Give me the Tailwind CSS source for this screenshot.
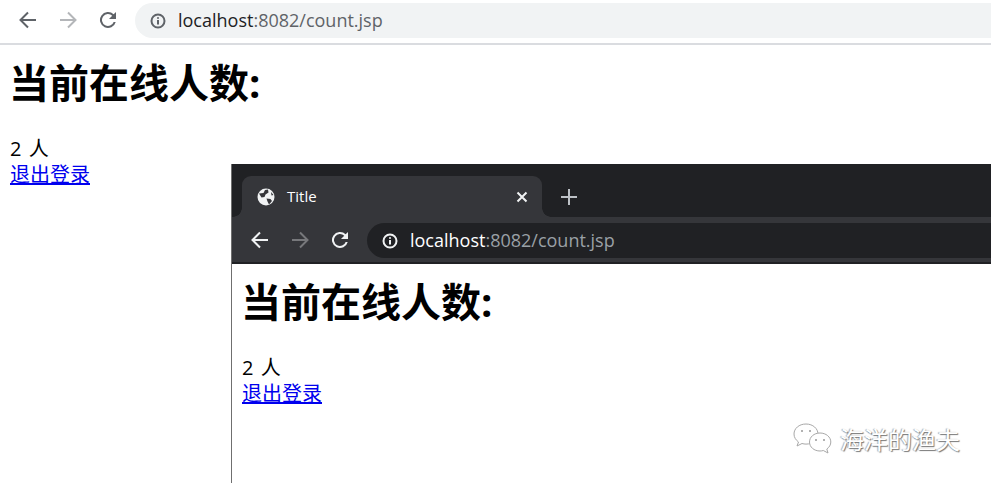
<!DOCTYPE html>
<html lang="zh-CN">
<head>
  <meta charset="UTF-8" />
  <title>count.jsp</title>
  <script src="https://cdn.jsdelivr.net/npm/@tailwindcss/browser@4"></script>
</head>
<body class="relative h-[483px] w-[991px] overflow-hidden bg-white font-['Open_Sans','Noto_Sans_CJK_SC',sans-serif] text-black">

  <!-- Light browser toolbar -->
  <div class="flex h-[45px] items-start border-b-2 border-[#dadce0] bg-white">
    <div class="flex h-[40px] items-center gap-[16px] pl-[16px] text-[#5f6368]">
      <svg class="h-[24px] w-[24px]" viewBox="0 0 24 24" fill="none" stroke="#5f6368" stroke-width="2"><path d="M20 12H5M12 4.500 4.500 12l7.500 7.500"/></svg>
      <svg class="h-[24px] w-[24px]" viewBox="0 0 24 24" fill="none" stroke="#b4b6b9" stroke-width="2"><path d="M4 12h15M12 4.500 19.500 12 12 19.500"/></svg>
      <svg class="h-[24px] w-[24px]" viewBox="0 0 24 24" fill="#5f6368"><path d="M17.650 6.350A8 8 0 1 0 19.730 14h-2.080a6 6 0 1 1-1.410-6.240L13 11h7V4z"/></svg>
    </div>
    <div class="mt-[3px] ml-[15px] flex h-[35px] flex-1 items-center rounded-l-full bg-[#f1f3f4] pl-[15px]">
      <svg class="h-[16px] w-[16px]" viewBox="0 0 16 16" fill="none" stroke="#5f6368"><circle cx="8" cy="8" r="6.500" stroke-width="2"/><path d="M8 7v4.500" stroke-width="2"/><path d="M8 4.200v1.600" stroke-width="2"/></svg>
      <span class="ml-[12px] text-[18px] text-[#5f6368]"><span class="text-[#202124]">localhost</span>:8082/count.jsp</span>
    </div>
  </div>

  <!-- Page content -->
  <div class="pl-[10px]">
    <h1 class="mt-[14px] -ml-[1px] text-[40px] leading-[47px] font-bold">当前在线人数:</h1>
    <p class="mt-[30px] text-[20px] leading-[26px] [word-spacing:2px]">2 人</p>
    <a href="#" class="block w-fit text-[20px] leading-[26px] text-[#0000ee] underline">退出登录</a>
  </div>

  <!-- Dark browser window laid over the page -->
  <div class="absolute top-[164px] right-0 bottom-0 left-[231px] border-l border-[#6f6f6f] bg-white">
    <div class="flex h-[53px] items-end bg-[#202124] pl-[10px]">
      <div class="relative flex h-[41px] w-[300px] items-center rounded-t-[9px] bg-[#35363a] pl-[15px] text-white">
        <div class="absolute bottom-0 -left-[9px] h-[9px] w-[9px] bg-[radial-gradient(circle_at_0_0,#202124_8.500px,#35363a_9px)]"></div>
        <div class="absolute -right-[9px] bottom-0 h-[9px] w-[9px] bg-[radial-gradient(circle_at_100%_0,#202124_8.500px,#35363a_9px)]"></div>
        <svg class="h-[18px] w-[18px]" viewBox="0 0 18 18"><circle cx="9" cy="9" r="8.500" fill="#f1f3f4"/><path d="M2 5.500 6.500 5 8 2l3-.5.500 3-3 2-1 2.500-3 .5zM9.500 10.500l4 .5 1.500 2-3 3.500-1.500-3zM14 4l2.500 3-2 .500z" fill="#35363a"/></svg>
        <span class="ml-[12px] flex-1 text-[15px]">Title</span>
        <svg class="mr-[14px] h-[12px] w-[12px]" viewBox="0 0 12 12" stroke="#f1f3f4" stroke-width="2"><path d="M1.500 1.500l9 9M10.500 1.500l-9 9"/></svg>
      </div>
      <svg class="mb-[12px] ml-[19px] h-[16px] w-[16px]" viewBox="0 0 16 16" stroke="#bdc1c6" stroke-width="2"><path d="M8 0v16M0 8h16"/></svg>
    </div>
    <div class="flex h-[47px] items-start border-b-2 border-[#202124] bg-[#35363a]">
      <div class="flex h-[46px] items-center gap-[16px] pl-[16px]">
        <svg class="h-[24px] w-[24px]" viewBox="0 0 24 24" fill="none" stroke="#f1f3f4" stroke-width="2"><path d="M20 12H5M12 4.500 4.500 12l7.500 7.500"/></svg>
        <svg class="h-[24px] w-[24px]" viewBox="0 0 24 24" fill="none" stroke="#77787b" stroke-width="2"><path d="M4 12h15M12 4.500 19.500 12 12 19.500"/></svg>
        <svg class="h-[24px] w-[24px]" viewBox="0 0 24 24" fill="#f1f3f4"><path d="M17.650 6.350A8 8 0 1 0 19.730 14h-2.080a6 6 0 1 1-1.410-6.240L13 11h7V4z"/></svg>
      </div>
      <div class="mt-[6px] ml-[15px] flex h-[35px] flex-1 items-center rounded-l-full bg-[#202124] pl-[15px]">
        <svg class="h-[16px] w-[16px]" viewBox="0 0 16 16" fill="none" stroke="#f1f3f4"><circle cx="8" cy="8" r="6.500" stroke-width="2"/><path d="M8 7v4.500" stroke-width="2"/><path d="M8 4.200v1.600" stroke-width="2"/></svg>
        <span class="ml-[12px] text-[18px] text-[#9aa0a6]"><span class="text-white">localhost</span>:8082/count.jsp</span>
      </div>
    </div>
    <div class="pl-[10px]">
      <h1 class="mt-[14px] -ml-[1px] text-[40px] leading-[47px] font-bold">当前在线人数:</h1>
      <p class="mt-[30px] text-[20px] leading-[26px] [word-spacing:2px]">2 人</p>
      <a href="#" class="block w-fit text-[20px] leading-[26px] text-[#0000ee] underline">退出登录</a>
    </div>
  </div>

  <!-- Watermark -->
  <div class="absolute top-[422px] left-[792px] flex items-center">
    <svg class="h-[36px] w-[40px]" viewBox="0 0 40 36" fill="#fff" stroke="#a8a8a8" stroke-width="1"><path d="M14 2C7 2 2 6.500 2 12c0 3.300 1.800 6 4.500 8L5 24l5-2.500c1.300.4 2.700.6 4 .6 7 0 12-4.600 12-10S21 2 14 2z"/><path d="M28 11c-6 0-10.500 4-10.500 9s4.500 9 10.500 9c1.200 0 2.300-.2 3.300-.5L36 31l-1.200-4c2.500-1.700 4-4.200 4-7 0-5-4.800-9-10.800-9z"/><circle cx="10" cy="9" r="1" stroke="none" fill="#999"/><circle cx="18" cy="9" r="1" stroke="none" fill="#999"/><circle cx="24" cy="18" r="1" stroke="none" fill="#999"/><circle cx="32" cy="18" r="1" stroke="none" fill="#999"/></svg>
    <span class="ml-[8px] text-[24px] leading-[32px] text-white [text-shadow:1px_1px_1px_#777,-1px_0_1px_#aaa]">海洋的渔夫</span>
  </div>
</body>
</html>
